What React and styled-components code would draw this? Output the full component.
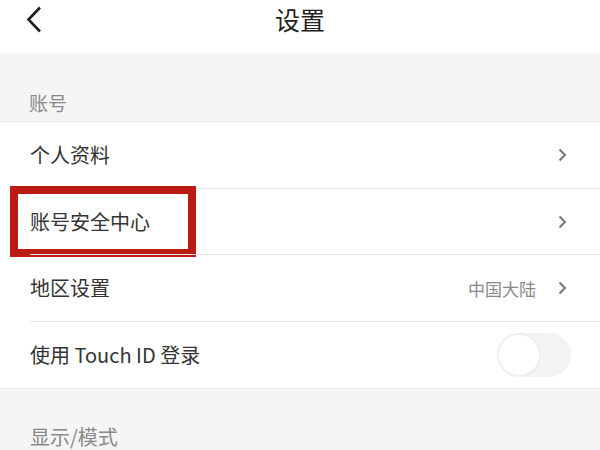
import React from "react";
import styled, { createGlobalStyle } from "styled-components";

const Global = createGlobalStyle`
  html, body { margin: 0; padding: 0; background: #f5f5f5; }
  body { font-family: "Noto Sans CJK SC", "Noto Sans", sans-serif; }
`;

const Page = styled.div`
  width: 600px;
  height: 450px;
  overflow: hidden;
  background: #f5f5f5;
`;

const Header = styled.header`
  height: 53px;
  background: #fff;
  display: grid;
  grid-template-columns: 60px 1fr 60px;
  align-items: center;
`;

const Back = styled.button`
  border: none;
  background: none;
  padding: 6px 0 0 26px;
  height: 53px;
  display: flex;
  align-items: flex-start;
`;

const Title = styled.h1`
  margin: 0;
  text-align: center;
  font-size: 25px;
  font-weight: 400;
  color: #222;
  line-height: 1;
  transform: translateY(-7px);
`;

const SectionLabel = styled.div`
  height: ${(p) => p.$h}px;
  display: flex;
  align-items: flex-end;
  padding: 0 0 ${(p) => p.$pb}px ${(p) => p.$pl}px;
  box-sizing: border-box;
  font-size: ${(p) => p.$fs}px;
  color: #8a8a8a;
  line-height: 1;
`;

const Group = styled.div`
  background: #fff;
  border-top: 1px solid #e6e6e6;
  border-bottom: 1px solid #e6e6e6;
`;

const Row = styled.div`
  position: relative;
  height: 66.5px;
  display: flex;
  align-items: center;
  padding: 0 ${(p) => (p.$toggle ? 29 : 33)}px 0 30px;
  box-sizing: border-box;
  &:not(:last-child)::after {
    content: "";
    position: absolute;
    left: 30px;
    right: 0;
    bottom: 0;
    height: 1px;
    background: #e6e6e6;
  }
`;

const Label = styled.span`
  flex: 1;
  font-size: 20px;
  color: #333;
  line-height: 1;
`;

const Value = styled.span`
  font-size: 17px;
  color: #888;
  margin-right: 22px;
  line-height: 1;
`;

const Highlight = styled.div`
  position: absolute;
  left: 10px;
  top: -3px;
  width: 186px;
  height: 71px;
  border: 8px solid #bb1b12;
  box-sizing: border-box;
  pointer-events: none;
`;

const Track = styled.div`
  width: 74px;
  height: 44px;
  border-radius: 22px;
  background: #f3f3f3;
  display: flex;
  align-items: center;
  padding: 1px;
  box-sizing: border-box;
`;

const Knob = styled.div`
  width: 42px;
  height: 42px;
  border-radius: 50%;
  background: #fff;
  box-shadow: 0 0 2px rgba(0, 0, 0, 0.06);
  border: 1px solid #eeeeee;
  box-sizing: border-box;
`;

const Chevron = () => (
  <svg width="9" height="14" viewBox="0 0 9 14">
    <path d="M1.5 1.5 L7 7 L1.5 12.5" fill="none" stroke="#777" strokeWidth="2" />
  </svg>
);

const BackIcon = () => (
  <svg width="16" height="28" viewBox="0 0 16 28">
    <path d="M14 1.5 L2.5 13.5 L14 25.5" fill="none" stroke="#1e1e1e" strokeWidth="2.6" />
  </svg>
);

export default function App() {
  return (
    <Page>
      <Global />
      <Header>
        <Back aria-label="返回">
          <BackIcon />
        </Back>
        <Title>设置</Title>
        <div />
      </Header>
      <SectionLabel $h={68} $pb={9} $pl={29} $fs={19}>账号</SectionLabel>
      <Group>
        <Row>
          <Label>个人资料</Label>
          <Chevron />
        </Row>
        <Row>
          <Label>账号安全中心</Label>
          <Chevron />
          <Highlight />
        </Row>
        <Row>
          <Label>地区设置</Label>
          <Value>中国大陆</Value>
          <Chevron />
        </Row>
        <Row $toggle>
          <Label>使用 Touch ID 登录</Label>
          <Track>
            <Knob />
          </Track>
        </Row>
      </Group>
      <SectionLabel $h={60} $pb={2} $pl={30} $fs={20}>显示/模式</SectionLabel>
    </Page>
  );
}
